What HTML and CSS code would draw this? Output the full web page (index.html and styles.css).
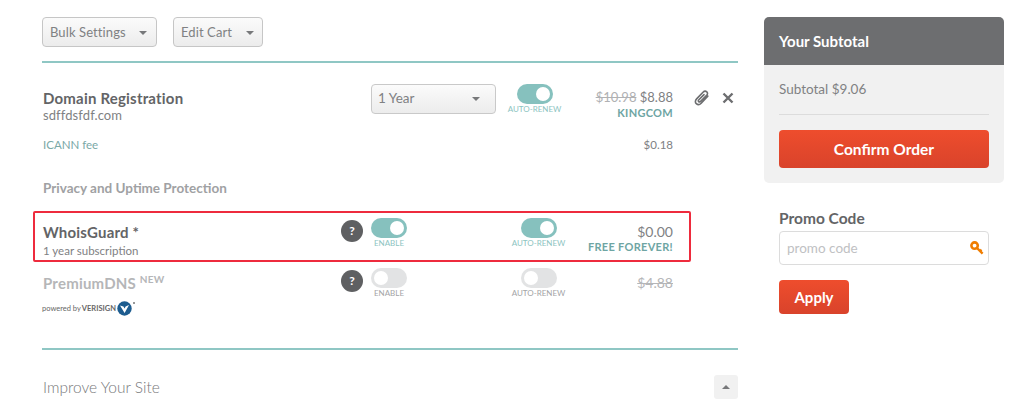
FILE: index.html
```html
<!DOCTYPE html>
<html>
<head>
  <title>Shopping Cart</title>
  <link rel="stylesheet" href="styles.css">
</head>

<body>
  <main id="cart">
    <div class="toolbar">
      <button class="drop-btn bulk">Bulk Settings <span class="caret"></span></button>
      <button class="drop-btn edit">Edit Cart <span class="caret"></span></button>
    </div>

    <section class="cart-items">
      <div class="row domain-row">
        <div class="info">
          <h3 class="item-title">Domain Registration</h3>
          <div class="item-sub">sdffdsfdf.com</div>
        </div>
        <div class="year-select">1 Year <span class="caret"></span></div>
        <div class="toggle-col renew-col">
          <span class="toggle on"></span>
          <span class="toggle-label teal">AUTO-RENEW</span>
        </div>
        <div class="price">
          <div class="amount"><s>$10.98</s> $8.88</div>
          <div class="promo-tag">KINGCOM</div>
        </div>
        <div class="actions">
          <svg class="clip" width="16" height="16" viewBox="0 0 16 16"><path d="M13.8 6.2 7.2 13.2c-1.5 1.6-3.6 1.7-4.9.5s-1.2-3.2.3-4.8L9 2.2c1.2-1.2 2.8-1.3 3.8-.4s1 2.4-.2 3.6L6.6 11.4c-.6.6-1.4.7-1.9.2s-.4-1.3.2-1.9L10 4.6" fill="none" stroke="#6d6e70" stroke-width="1.6" stroke-linecap="round"/></svg>
          <svg class="close" width="12" height="12" viewBox="0 0 12 12"><path d="M1.5 1.5 10.5 10.5M10.5 1.5 1.5 10.5" fill="none" stroke="#6d6e70" stroke-width="2.4"/></svg>
        </div>
      </div>

      <div class="fee-row">
        <span class="fee-name">ICANN fee</span>
        <span class="fee-price">$0.18</span>
      </div>

      <h4 class="group-title">Privacy and Uptime Protection</h4>

      <div class="row addon-row whois">
        <div class="info">
          <h3 class="item-title">WhoisGuard *</h3>
          <div class="item-note">1 year subscription</div>
        </div>
        <span class="help">?</span>
        <div class="toggle-col enable-col">
          <span class="toggle on"></span>
          <span class="toggle-label teal">ENABLE</span>
        </div>
        <div class="toggle-col addon-renew">
          <span class="toggle on"></span>
          <span class="toggle-label teal">AUTO-RENEW</span>
        </div>
        <div class="price">
          <div class="amount">$0.00</div>
          <div class="promo-tag">FREE FOREVER!</div>
        </div>
        <div class="highlight"></div>
      </div>

      <div class="row addon-row premium">
        <div class="info">
          <h3 class="item-title muted">PremiumDNS <sup>NEW</sup></h3>
          <div class="powered">
            <span>powered by</span> <b>VERISIGN</b>
            <svg width="19" height="15" viewBox="0 0 19 15"><circle cx="7.5" cy="7.5" r="7.2" fill="#1d5c8f"/><path d="M3 4.5 7.6 12 12 4 8.6 5.6 7.6 7.6 6.4 5.6Z" fill="#fff"/><circle cx="17" cy="2" r="1" fill="#777"/></svg>
          </div>
        </div>
        <span class="help">?</span>
        <div class="toggle-col enable-col">
          <span class="toggle"></span>
          <span class="toggle-label">ENABLE</span>
        </div>
        <div class="toggle-col addon-renew">
          <span class="toggle"></span>
          <span class="toggle-label">AUTO-RENEW</span>
        </div>
        <div class="price">
          <div class="amount muted"><s>$4.88</s></div>
        </div>
      </div>
    </section>

    <div class="improve">
      <span>Improve Your Site</span>
      <span class="collapse"><span class="caret up"></span></span>
    </div>
  </main>

  <aside id="sidebar">
    <div class="subtotal-box">
      <div class="subtotal-head">Your Subtotal</div>
      <div class="subtotal-body">
        <div class="subtotal-line">Subtotal $9.06</div>
        <button class="btn-confirm">Confirm Order</button>
      </div>
    </div>
    <form class="promo">
      <label class="promo-label" for="promo-code">Promo Code</label>
      <div class="promo-field">
        <input id="promo-code" type="text" placeholder="promo code">
        <svg width="14" height="14" viewBox="0 0 14 14"><circle cx="4.6" cy="4.6" r="3.2" fill="none" stroke="#f07d00" stroke-width="2.6"/><path d="M7 7l5.6 5.6M10 10l1.6-1.2" fill="none" stroke="#f07d00" stroke-width="2.4"/></svg>
      </div>
      <button class="btn-apply" type="button">Apply</button>
    </form>
  </aside>
</body>
</html>
```

FILE: styles.css
```css
body {
  font-family: Lato, "Open Sans", sans-serif;
  margin: 0;
  height: 417px;
  overflow: hidden;
  display: flex;
  background-color: #fff;
  color: #6d6e70;
}

#cart {
  width: 696px;
  margin-left: 42px;
}

#sidebar {
  width: 240px;
  margin-left: 26px;
  padding-top: 17px;
}

.toolbar {
  display: flex;
  gap: 16px;
  padding-top: 17px;
  height: 44px;
  border-bottom: 2px solid #8fc7c4;
}

.drop-btn {
  font-family: inherit;
  font-size: 13px;
  color: #808183;
  height: 30px;
  padding: 0 0 0 7px;
  text-align: left;
  border: 1px solid #c6c6c6;
  border-radius: 4px;
  background: linear-gradient(#fbfbfb, #ececec);
  letter-spacing: 0.1px;
}

.bulk { width: 115px; }
.edit { width: 90px; }

.caret {
  display: inline-block;
  width: 0;
  height: 0;
  margin-left: 10px;
  vertical-align: 2px;
  border-left: 4px solid transparent;
  border-right: 4px solid transparent;
  border-top: 4px solid #77787a;
}

.caret.up {
  margin: 0;
  border-top: 0;
  border-bottom: 4px solid #77787a;
}

.row {
  display: flex;
  position: relative;
}

.domain-row {
  margin-top: 21px;
  height: 46px;
}

.domain-row .info {
  width: 329px;
  padding-top: 5px;
}

.item-title {
  margin: 0;
  padding-left: 1px;
  font-size: 15px;
  line-height: 18px;
  font-weight: 700;
  color: #636466;
  letter-spacing: 0.2px;
}

.item-sub {
  padding-left: 1px;
  font-size: 13px;
  line-height: 16px;
  color: #808183;
  letter-spacing: 0.1px;
}

.year-select {
  box-sizing: border-box;
  width: 125px;
  height: 30px;
  padding: 0 0 0 6px;
  font-size: 13.5px;
  line-height: 27px;
  color: #808183;
  border: 1px solid #c9c9c9;
  border-radius: 4px;
  background: linear-gradient(#fbfbfb, #ececec);
}

.year-select .caret {
  margin-left: 54px;
}

.toggle-col {
  display: flex;
  flex-direction: column;
  align-items: center;
  width: 55px;
}

.renew-col {
  margin-left: 11px;
}

.toggle {
  box-sizing: border-box;
  display: flex;
  width: 36px;
  height: 20px;
  padding: 3px;
  border-radius: 10px;
  background: #e2e3e4;
}

.toggle::before {
  content: "";
  width: 14px;
  height: 14px;
  border-radius: 50%;
  background: #fff;
}

.toggle.on {
  justify-content: flex-end;
  background: #86c1be;
}

.toggle-label {
  font-size: 8px;
  line-height: 11px;
  margin-top: 0;
  color: #a3a4a6;
  white-space: nowrap;
}

.toggle-label.teal {
  color: #8cc4c1;
}

.price {
  width: 111px;
  text-align: right;
}

.domain-row .price {
  padding-top: 5px;
}

.amount {
  font-size: 13px;
  line-height: 17px;
  color: #808183;
}

.amount s {
  color: #b0b1b3;
}

.promo-tag {
  font-size: 11px;
  line-height: 13px;
  font-weight: 700;
  color: #6ea5a3;
  letter-spacing: 0.3px;
}

.actions {
  display: flex;
  align-items: center;
  gap: 12px;
  height: 13px;
  margin: 7px 0 0 21px;
}

.fee-row {
  display: flex;
  justify-content: space-between;
  width: 630px;
  margin-top: 8px;
  padding-left: 1px;
  font-size: 11.5px;
  line-height: 14px;
}

.fee-name {
  color: #7aa9a7;
}

.fee-price {
  color: #808183;
}

.group-title {
  margin: 28px 0 0;
  padding-left: 1px;
  font-size: 13.5px;
  line-height: 16px;
  font-weight: 700;
  color: #a0a1a3;
}

.addon-row {
  height: 51px;
}

.whois {
  margin-top: 15px;
}

.addon-row .info {
  width: 299px;
}

.whois .info {
  padding-top: 12px;
}

.item-note {
  margin-top: 3px;
  padding-left: 1px;
  font-size: 11.5px;
  line-height: 14px;
  color: #808183;
}

.help {
  width: 22px;
  height: 22px;
  margin-top: 9px;
  border-radius: 50%;
  background: #5f6062;
  color: #fff;
  font-size: 12px;
  line-height: 22px;
  font-weight: 700;
  text-align: center;
}

.enable-col {
  width: 36px;
  margin: 7px 0 0 8px;
}

.addon-renew {
  margin: 7px 0 0 104px;
}

.whois .price {
  width: 107px;
  padding-top: 12px;
}

.whois .amount {
  font-size: 14px;
}

.premium .price {
  width: 107px;
  padding-top: 12px;
}

.highlight {
  position: absolute;
  left: -9px;
  top: 0;
  width: 654px;
  height: 47px;
  border: 2px solid #ee2b3d;
  border-radius: 2px;
}

.premium .info {
  padding-top: 12px;
}

.premium .help {
  margin-top: 8px;
}

.premium .enable-col,
.premium .addon-renew {
  margin-top: 6px;
}

.muted {
  color: #b5b6b8;
}

.item-title.muted sup {
  font-size: 10px;
  line-height: 0;
  font-weight: 700;
}

.amount.muted s {
  color: #b5b6b8;
  font-size: 14px;
}

.powered {
  display: flex;
  align-items: center;
  gap: 1px;
  margin-top: 9px;
  font-size: 7.5px;
  color: #666;
}

.powered b {
  color: #666;
}

.improve {
  display: flex;
  justify-content: space-between;
  align-items: center;
  margin-top: 35px;
  padding-top: 25px;
  border-top: 2px solid #8fc7c4;
  font-size: 15.5px;
  font-weight: 300;
  color: #77787a;
}

.improve > span:first-child {
  padding-left: 1px;
}

.collapse {
  display: flex;
  align-items: center;
  justify-content: center;
  width: 24px;
  height: 24px;
  border-radius: 3px;
  background: #f1f1f1;
}

.subtotal-box {
  border-radius: 5px;
  overflow: hidden;
  background: #f1f1f1;
}

.subtotal-head {
  height: 48px;
  padding-left: 15px;
  font-size: 15px;
  line-height: 48px;
  font-weight: 700;
  color: #fff;
  background: #6d6e70;
}

.subtotal-body {
  padding: 0 15px 15px;
}

.subtotal-line {
  height: 49px;
  font-size: 13.5px;
  line-height: 49px;
  color: #808183;
  border-bottom: 1px solid #dcdcdc;
}

.btn-confirm {
  display: block;
  width: 100%;
  height: 38px;
  margin-top: 15px;
  font-family: inherit;
  font-size: 15.5px;
  font-weight: 700;
  color: #fff;
  border: 0;
  border-radius: 4px;
  background: linear-gradient(#ee4d2d, #d9432b);
}

.promo {
  padding: 26px 15px 0;
}

.promo-label {
  display: block;
  font-size: 15.5px;
  line-height: 18px;
  font-weight: 700;
  color: #636466;
}

.promo-field {
  display: flex;
  align-items: center;
  box-sizing: border-box;
  height: 34px;
  margin-top: 4px;
  padding: 0 4px 0 7px;
  border: 1px solid #dcdcdc;
  border-radius: 4px;
}

.promo-field input {
  flex: 1;
  min-width: 0;
  padding: 0;
  border: 0;
  outline: 0;
  font-family: inherit;
  font-size: 13.5px;
}

.promo-field input::placeholder {
  color: #c0c1c3;
}

.btn-apply {
  display: block;
  width: 70px;
  height: 34px;
  margin-top: 15px;
  font-family: inherit;
  font-size: 15px;
  font-weight: 700;
  color: #fff;
  border: 0;
  border-radius: 4px;
  background: linear-gradient(#ee4d2d, #d9432b);
}
```
